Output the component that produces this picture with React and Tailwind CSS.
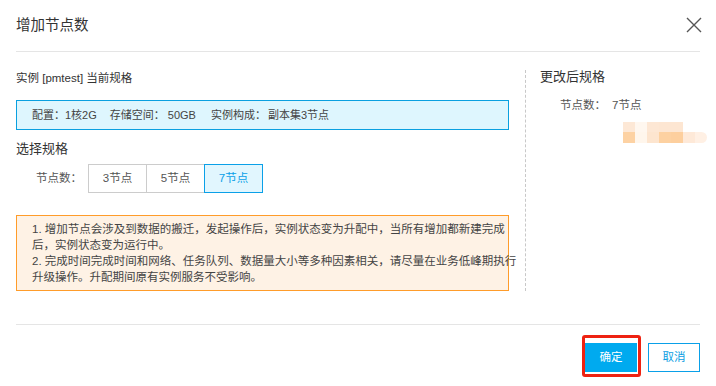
export default function App() {
  return (
    <div className="w-[716px] h-[386px] bg-white text-[#333] font-['Liberation_Sans','Noto_Sans_CJK_SC',sans-serif] overflow-hidden">
      <Header />
      <Body />
      <Footer />
    </div>
  );
}

function Header() {
  return (
    <div className="px-4">
      <div className="h-[52px] border-b border-[#e5e5e5] flex items-center justify-between">
        <h2 className="text-[14.5px] leading-[20px] text-[#333] mt-[-2px]">增加节点数</h2>
        <svg width="16" height="16" viewBox="0 0 16 16" className="mr-[-2px] mt-[-2px]">
          <path d="M1 1 L15 15 M15 1 L1 15" stroke="#555" strokeWidth="1.4" />
        </svg>
      </div>
    </div>
  );
}

function Body() {
  return (
    <div className="px-4 pt-[18px] flex">
      {/* Current spec */}
      <div className="w-[493px] shrink-0">
        <p className="text-[11.5px] leading-4">实例 [pmtest] 当前规格</p>

        <div className="mt-[14px] h-[30px] border border-[#0aa0e0] bg-[#def6fe] flex items-center pl-[15px] text-[11px] text-[#444]">
          <span>配置：</span>
          <span>1核2G</span>
          <span className="ml-[13px]">存储空间：</span>
          <span className="ml-[3px]">50GB</span>
          <span className="ml-[15px]">实例构成：</span>
          <span className="ml-[2px]">副本集3节点</span>
        </div>

        <h3 className="mt-[10px] text-[13px] leading-[18px]">选择规格</h3>

        <div className="mt-[6px] flex items-center pl-5">
          <span className="w-[52px] text-[11.5px] text-[#555]">节点数：</span>
          <div className="flex h-[29px] text-[11.5px]">
            <button className="w-[59px] border border-[#ccc] text-[#555]">3节点</button>
            <button className="w-[57px] border-y border-[#ccc] text-[#555]">5节点</button>
            <button className="w-[59px] border border-[#0aa0e8] bg-[#e1f6fe] text-[#0aa0e8]">7节点</button>
          </div>
        </div>

        <div className="mt-[22px] border border-[#ff9c2a] bg-[#fef2e5] pl-[15px] pt-[5px] pb-[5px] text-[11.5px] leading-4 text-[#444] whitespace-nowrap">
          <p>1. 增加节点会涉及到数据的搬迁，发起操作后，实例状态变为升配中，当所有增加都新建完成</p>
          <p>后，实例状态变为运行中。</p>
          <p>2. 完成时间完成时间和网络、任务队列、数据量大小等多种因素相关，请尽量在业务低峰期执行</p>
          <p>升级操作。升配期间原有实例服务不受影响。</p>
        </div>
      </div>

      {/* New spec */}
      <div className="ml-4 flex-1 border-l border-dashed border-[#c8c8c8] pl-[14px]">
        <h3 className="text-[13px] leading-[13px]">更改后规格</h3>
        <div className="mt-[14px] pl-5 flex gap-[6px] text-[11.5px] leading-4 text-[#555]">
          <span>节点数：</span>
          <span>7节点</span>
        </div>
        <div className="mt-[9px] ml-[83px] w-[84px]">
          <div className="flex h-[10px]">
            <div className="w-[12px] bg-[#fde8d6]" />
            <div className="w-[12px] bg-[#fff7ef]" />
            <div className="w-[12px] bg-[#fde7d4]" />
            <div className="w-[12px] bg-[#fde6d2]" />
            <div className="w-[12px] bg-[#fde6d2]" />
          </div>
          <div className="flex h-[11px]">
            <div className="w-[12px] bg-[#fdd2a3]" />
            <div className="w-[12px] bg-[#fff6ec]" />
            <div className="w-[12px] bg-[#fde5cf]" />
            <div className="w-[12px] bg-[#fdd1a1]" />
            <div className="w-[12px] bg-[#fdcf9e]" />
            <div className="w-[12px] bg-[#fee9d8]" />
            <div className="w-[12px] bg-[#fff0e4] rounded-r-md" />
          </div>
        </div>
      </div>
    </div>
  );
}

function Footer() {
  return (
    <div className="px-4 mt-[33px]">
      <div className="border-t border-[#e5e5e5] pt-[18px] flex justify-end gap-[11px]">
        <div className="relative">
          <button className="w-[52px] h-[29px] bg-[#00aaef] text-white text-[11.5px]">确定</button>
          <div className="absolute left-[-3px] top-[-8px] w-[59px] h-[42px] border-[3px] border-[#ee2211] rounded-[3px]" />
        </div>
        <button className="w-[52px] h-[29px] border border-[#0aa0e8] text-[#0a9ee3] text-[11.5px]">取消</button>
      </div>
    </div>
  );
}
